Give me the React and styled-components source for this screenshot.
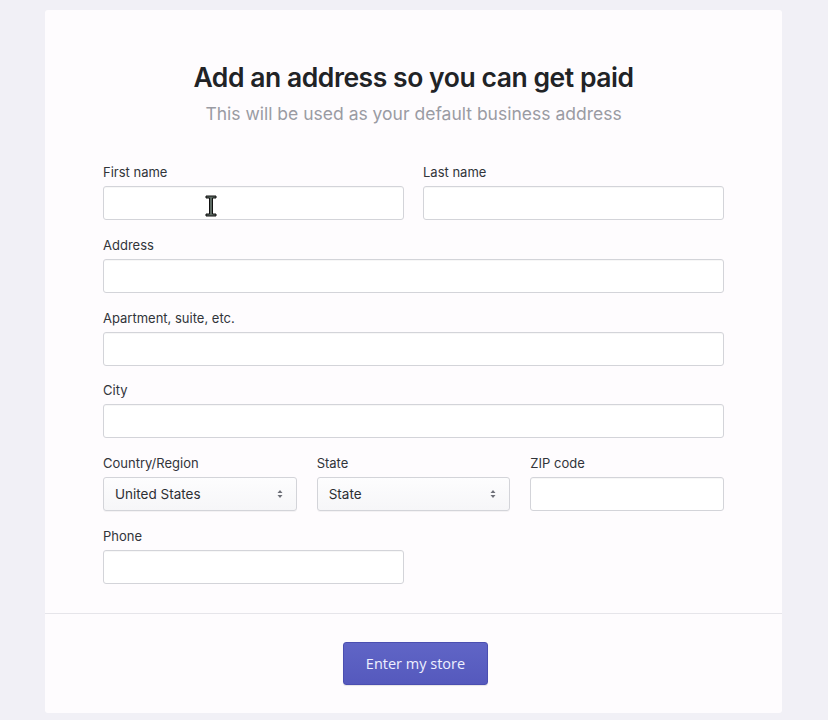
import React from 'react';
import styled, { createGlobalStyle } from 'styled-components';

const Global = createGlobalStyle`
  html, body {
    margin: 0;
    padding: 0;
    background: #f1f0f6;
    font-family: Inter, "Noto Sans", sans-serif;
  }
`;

const Page = styled.div`
  padding: 10px 46px 7px 45px;
`;

const Card = styled.div`
  background: #fefcfe;
  border-radius: 3px;
  height: 703px;
  display: flex;
  flex-direction: column;
`;

const Body = styled.div`
  padding: 50px 58px 0;
`;

const Title = styled.h1`
  margin: 0;
  text-align: center;
  font-size: 26.5px;
  font-weight: 600;
  letter-spacing: -0.45px;
  color: #212326;
  line-height: 34px;
`;

const Subtitle = styled.p`
  margin: 8px 0 0;
  text-align: center;
  font-size: 17.5px;
  color: #9a9ba3;
  line-height: 24px;
`;

const Form = styled.div`
  margin-top: 38px;
  display: flex;
  flex-direction: column;
  gap: 16.8px;
`;

const Row = styled.div`
  display: grid;
  grid-template-columns: ${p => p.cols || '1fr'};
  column-gap: ${p => p.gap || 19}px;
`;

const Field = styled.label`
  position: relative;
  display: flex;
  flex-direction: column;
`;

const Label = styled.span`
  font-size: 13px;
  color: #31343a;
  line-height: 16px;
  margin-bottom: 6px;
`;

const Input = styled.div`
  height: 32px;
  border: 1px solid #d3d4d9;
  border-radius: 3px;
  background: #fff;
  box-shadow: inset 0 1px 0 rgba(0, 0, 0, 0.03);
`;

const Select = styled(Input)`
  display: flex;
  align-items: center;
  justify-content: space-between;
  padding: 0 13px 0 11px;
  font-size: 13.5px;
  color: #2c2e33;
  background: linear-gradient(#fdfdfe, #f6f6f8);
  box-shadow: 0 1px 0 rgba(0, 0, 0, 0.04);
`;

const Cursor = styled.svg`
  position: absolute;
  left: 101px;
  top: 30px;
`;

const Footer = styled.div`
  margin-top: auto;
  height: 100px;
  box-sizing: border-box;
  border-top: 1px solid #e6e5ea;
  display: flex;
  align-items: flex-start;
  justify-content: center;
  padding: 28px 0 0 4px;
`;

const Button = styled.button`
  width: 145px;
  height: 43px;
  border: 1px solid #4b4fb1;
  border-radius: 3px;
  background: linear-gradient(#6065c6, #5559bd);
  color: #eef0ff;
  font-family: "Open Sans", "Noto Sans", sans-serif;
  font-size: 14.5px;
  box-shadow: 0 1px 1px rgba(0, 0, 0, 0.1);
`;

function Arrows() {
  return (
    <svg width="6" height="10" viewBox="0 0 6 10">
      <path d="M3 1 L5.5 4 H0.5 Z M3 9 L5.5 6 H0.5 Z" fill="#6e7078" />
    </svg>
  );
}

function TextField({ label, children }) {
  return (
    <Field>
      <Label>{label}</Label>
      <Input />
      {children}
    </Field>
  );
}

function SelectField({ label, value }) {
  return (
    <Field>
      <Label>{label}</Label>
      <Select>
        {value}
        <Arrows />
      </Select>
    </Field>
  );
}

export default function App() {
  return (
    <Page>
      <Global />
      <Card>
        <Body>
          <Title>Add an address so you can get paid</Title>
          <Subtitle>This will be used as your default business address</Subtitle>
          <Form>
            <Row cols="1fr 1fr">
              <TextField label="First name">
                <Cursor width="14" height="24" viewBox="0 0 14 24">
                  <path
                    d="M2 2 H12 V4 H8.5 V20 H12 V22 H2 V20 H5.5 V4 H2 Z"
                    fill="#5d6a63"
                    stroke="#111"
                    strokeWidth="1"
                  />
                </Cursor>
              </TextField>
              <TextField label="Last name" />
            </Row>
            <Row>
              <TextField label="Address" />
            </Row>
            <Row>
              <TextField label="Apartment, suite, etc." />
            </Row>
            <Row>
              <TextField label="City" />
            </Row>
            <Row cols="1fr 1fr 1fr" gap={20}>
              <SelectField label="Country/Region" value="United States" />
              <SelectField label="State" value="State" />
              <TextField label="ZIP code" />
            </Row>
            <Row cols="1fr 1fr">
              <TextField label="Phone" />
            </Row>
          </Form>
        </Body>
        <Footer>
          <Button>Enter my store</Button>
        </Footer>
      </Card>
    </Page>
  );
}
